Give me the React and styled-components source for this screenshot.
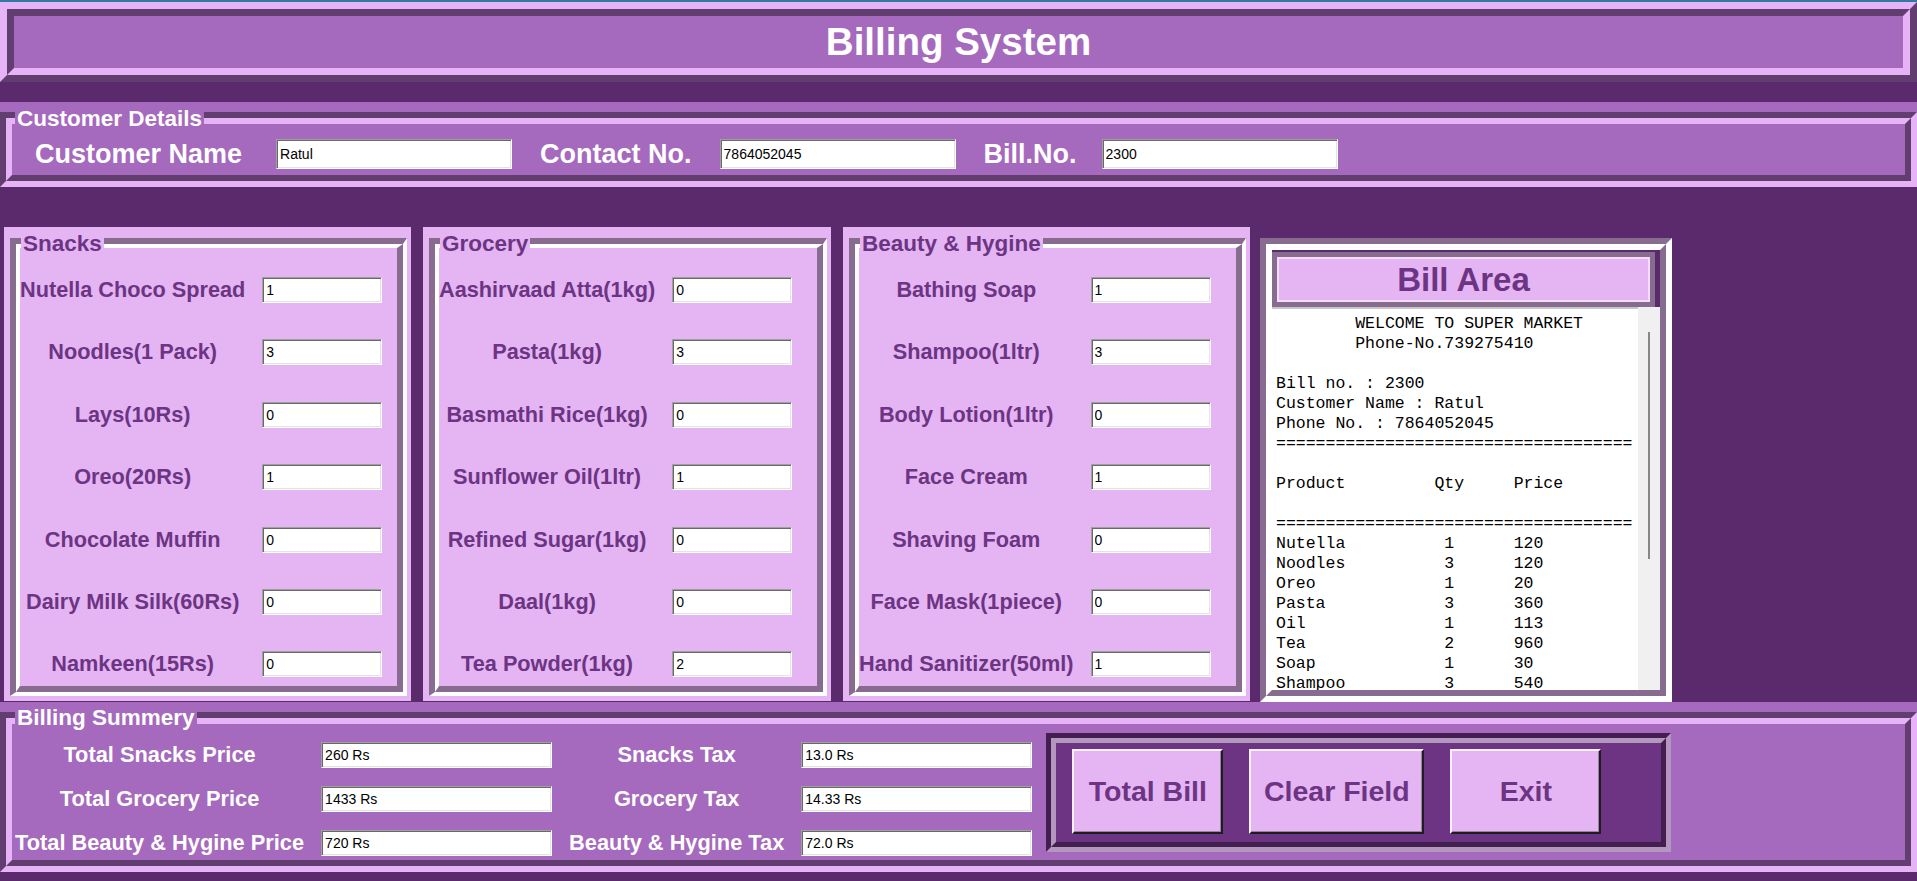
import styled, { createGlobalStyle } from 'styled-components'

const colors = {
  root: '#5a2a6c',
  purple: '#a569bd',
  purpleLight: '#e6b3f7',
  purpleDark: '#613e6f',
  lilac: '#e4b4f3',
  lilacDark: '#886c90',
  deep: '#6c3483',
  deepDark: '#431f51',
  deepLight: '#b497be',
  edge: '#2f7a9f',
}

const snacks = [
  ['Nutella Choco Spread', '1'],
  ['Noodles(1 Pack)', '3'],
  ['Lays(10Rs)', '0'],
  ['Oreo(20Rs)', '1'],
  ['Chocolate Muffin', '0'],
  ['Dairy Milk Silk(60Rs)', '0'],
  ['Namkeen(15Rs)', '0'],
]

const grocery = [
  ['Aashirvaad Atta(1kg)', '0'],
  ['Pasta(1kg)', '3'],
  ['Basmathi Rice(1kg)', '0'],
  ['Sunflower Oil(1ltr)', '1'],
  ['Refined Sugar(1kg)', '0'],
  ['Daal(1kg)', '0'],
  ['Tea Powder(1kg)', '2'],
]

const beauty = [
  ['Bathing Soap', '1'],
  ['Shampoo(1ltr)', '3'],
  ['Body Lotion(1ltr)', '0'],
  ['Face Cream', '1'],
  ['Shaving Foam', '0'],
  ['Face Mask(1piece)', '0'],
  ['Hand Sanitizer(50ml)', '1'],
]

const summary = [
  ['Total Snacks Price', '260 Rs', 'Snacks Tax', '13.0 Rs'],
  ['Total Grocery Price', '1433 Rs', 'Grocery Tax', '14.33 Rs'],
  ['Total Beauty & Hygine Price', '720 Rs', 'Beauty & Hygine Tax', '72.0 Rs'],
]

const billItems = [
  ['Nutella', '1', '120'],
  ['Noodles', '3', '120'],
  ['Oreo', '1', '20'],
  ['Pasta', '3', '360'],
  ['Oil', '1', '113'],
  ['Tea', '2', '960'],
  ['Soap', '1', '30'],
  ['Shampoo', '3', '540'],
]

const billText = [
  '        WELCOME TO SUPER MARKET',
  '        Phone-No.739275410',
  '',
  'Bill no. : 2300',
  'Customer Name : Ratul',
  'Phone No. : 7864052045',
  '='.repeat(36),
  '',
  'Product'.padEnd(16) + 'Qty'.padEnd(8) + 'Price',
  '',
  '='.repeat(36),
  ...billItems.map(([n, q, p]) => n.padEnd(17) + q.padEnd(7) + p),
].join('\n')

const GlobalStyle = createGlobalStyle`
  html, body {
    margin: 0;
    padding: 0;
    background: ${colors.root};
    overflow: hidden;
  }
  body {
    font-family: 'Liberation Sans', Arial, sans-serif;
  }
`

function Groove ({ outer, inner, tl, br, bg, fill, children }) {
  return (
    <Bevel $w={outer} $tl={tl} $br={br} $fill={fill}>
      <Bevel $w={inner} $tl={br} $br={tl} $fill={fill} $bg={bg}>
        {children}
      </Bevel>
    </Bevel>
  )
}

function ItemPanel ({ title, items, width }) {
  return (
    <Panel $w={width}>
      <FrameTitle $color={colors.deep} $top={4} $left={17}>{title}</FrameTitle>
      <Bevel $w='6px 4px 4px 6px' $tl={colors.lilacDark} $br='#ffffff' $fill>
        <Bevel $w='4px 6px 6px 4px' $tl='#ffffff' $br={colors.lilacDark} $fill>
          <ItemGrid>
            {items.map(([name, qty]) => (
              <Cell key={name}>
                <ItemLabel>{name}</ItemLabel>
                <Entry $w={120} $h={26} value={qty} readOnly />
              </Cell>
            ))}
          </ItemGrid>
        </Bevel>
      </Bevel>
    </Panel>
  )
}

export default function App () {
  return (
    <>
      <GlobalStyle />
      <Window>
        <TopEdge />
        <Groove outer='7px' inner='7px' tl={colors.purpleLight} br={colors.purpleDark} bg={colors.purple}>
          <TitleText>Billing System</TitleText>
        </Groove>

        <LabelFrame $bg={colors.purple} $mt={20}>
          <FrameTitle $color='#fff' $top={4} $left={15}>Customer Details</FrameTitle>
          <Groove outer='6px' inner='6px' tl={colors.purpleDark} br={colors.purpleLight}>
            <CustomerRow>
              <CustLabel $gap={34}>Customer Name</CustLabel>
              <Entry $w={236} $h={30} $mr={28} value='Ratul' readOnly />
              <CustLabel $gap={28}>Contact No.</CustLabel>
              <Entry $w={236} $h={30} $mr={28} value='7864052045' readOnly />
              <CustLabel $gap={25}>Bill.No.</CustLabel>
              <Entry $w={236} $h={30} value='2300' readOnly />
            </CustomerRow>
          </Groove>
        </LabelFrame>

        <ProductRow>
          <ItemPanel title='Snacks' items={snacks} width={407} />
          <ItemPanel title='Grocery' items={grocery} width={408} />
          <ItemPanel title='Beauty & Hygine' items={beauty} width={407} />
          <BillFrame>
            <Groove outer='6px' inner='6px' tl={colors.lilacDark} br='#ffffff' fill>
              <BillColumn>
                <BillLabel>Bill Area</BillLabel>
                <BillBox>
                  <BillBody>{billText}</BillBody>
                  <ScrollTrack>
                    <ScrollThumb />
                  </ScrollTrack>
                </BillBox>
              </BillColumn>
            </Groove>
          </BillFrame>
        </ProductRow>

        <LabelFrame $bg={colors.purple}>
          <FrameTitle $color='#fff' $top={3} $left={15}>Billing Summery</FrameTitle>
          <Groove outer='6px' inner='6px' tl={colors.purpleDark} br={colors.purpleLight}>
            <SummaryRow>
              <SummaryGrid>
                {summary.map(([l1, v1, l2, v2]) => (
                  <Cell key={l1}>
                    <SummaryLabel>{l1}</SummaryLabel>
                    <Entry $w={231} $h={26} value={v1} readOnly />
                    <SummaryLabel>{l2}</SummaryLabel>
                    <Entry $w={231} $h={26} value={v2} readOnly />
                  </Cell>
                ))}
              </SummaryGrid>
              <ButtonFrame>
                <Groove outer='5px' inner='5px' tl={colors.deepDark} br={colors.deepLight} bg={colors.deep} fill>
                  <ButtonRow>
                    <ActionButton $w={151}>Total Bill</ActionButton>
                    <ActionButton $w={175}>Clear Field</ActionButton>
                    <ActionButton $w={151}>Exit</ActionButton>
                  </ButtonRow>
                </Groove>
              </ButtonFrame>
            </SummaryRow>
          </Groove>
        </LabelFrame>
      </Window>
    </>
  )
}

/* FRAME */
const Window = styled.div`
  width: 1917px;
  height: 881px;
  display: flex;
  flex-direction: column;
  background: ${colors.root};
  overflow: hidden;
`

const TopEdge = styled.div`
  height: 2px;
  background: ${colors.edge};
`

const Bevel = styled.div`
  box-sizing: border-box;
  border-style: solid;
  border-width: ${({ $w }) => $w};
  border-color: ${({ $tl, $br }) => `${$tl} ${$br} ${$br} ${$tl}`};
  background: ${({ $bg }) => $bg || 'transparent'};
  height: ${({ $fill }) => ($fill ? '100%' : 'auto')};
`

const Cell = styled.div`
  display: contents;
`

const TitleText = styled.h1`
  margin: 0;
  height: 52px;
  line-height: 52px;
  text-align: center;
  color: #fff;
  font-size: 38.5px;
  font-weight: 700;
`

const LabelFrame = styled.section`
  position: relative;
  margin-top: ${({ $mt }) => $mt || 0}px;
  padding-top: 10px;
  background: ${({ $bg }) => $bg};
`

const FrameTitle = styled.span`
  position: absolute;
  z-index: 1;
  top: ${({ $top }) => $top}px;
  left: ${({ $left }) => $left}px;
  padding: 0 2px;
  background: inherit;
  color: ${({ $color }) => $color};
  font-size: 22.5px;
  font-weight: 700;
  line-height: 26px;
  white-space: nowrap;
`

const Entry = styled.input`
  box-sizing: border-box;
  width: ${({ $w }) => $w}px;
  height: ${({ $h }) => $h}px;
  margin: 0 ${({ $mr }) => $mr || 0}px 0 0;
  padding: 0 3px;
  border: 1px solid;
  border-color: #a0a0a0 #ffffff #ffffff #a0a0a0;
  box-shadow: inset 1px 1px 0 #696969, inset -1px -1px 0 #e3e3e3;
  background: #fff;
  color: #000;
  font-family: 'Liberation Sans', Arial, sans-serif;
  font-size: 14px;
  outline: none;
`

/* CUSTOMER */
const CustomerRow = styled.div`
  display: flex;
  align-items: center;
  height: 30px;
  padding: 15px 0 6px 23px;
`

const CustLabel = styled.span`
  margin-right: ${({ $gap }) => $gap}px;
  color: #fff;
  font-size: 27px;
  font-weight: 700;
  line-height: 30px;
  white-space: nowrap;
`

/* PRODUCTS */
const ProductRow = styled.div`
  display: flex;
  align-items: flex-start;
  gap: 12px;
  height: 475px;
  margin-top: 40px;
  padding-left: 4px;
`

const Panel = styled.section`
  position: relative;
  flex: none;
  box-sizing: border-box;
  width: ${({ $w }) => $w}px;
  height: 474px;
  padding: 11px 4px 5px 6px;
  background: ${colors.lilac};
`

const ItemGrid = styled.div`
  display: grid;
  grid-template-columns: auto 120px;
  grid-template-rows: repeat(7, 26px);
  column-gap: 17px;
  row-gap: 36.4px;
  padding-top: 29px;
  align-items: center;
  justify-content: start;
`

const ItemLabel = styled.span`
  justify-self: center;
  color: ${colors.deep};
  font-size: 21.7px;
  font-weight: 700;
  line-height: 26px;
  white-space: nowrap;
`

/* BILL AREA */
const BillFrame = styled.section`
  flex: none;
  align-self: flex-end;
  box-sizing: border-box;
  width: 412px;
  height: 464px;
  margin-left: -2px;
`

const BillColumn = styled.div`
  display: flex;
  flex-direction: column;
  height: 100%;
`

const BillLabel = styled.div`
  flex: none;
  box-sizing: border-box;
  height: 55px;
  margin: 2px 5px 0 0;
  display: flex;
  align-items: center;
  justify-content: center;
  border: 5px solid ${colors.lilacDark};
  box-shadow: inset 0 0 0 2px #f4dcfb;
  background: ${colors.lilac};
  color: ${colors.deep};
  font-size: 33px;
  font-weight: 700;
`

const BillBox = styled.div`
  flex: 1;
  display: flex;
  min-height: 0;
`

const BillBody = styled.pre`
  flex: 1;
  margin: 0;
  padding: 5px 0 0 4px;
  overflow: hidden;
  background: #fff;
  border-top: 2px solid #c6c6c6;
  color: #000;
  font-family: 'Liberation Mono', 'Courier New', monospace;
  font-size: 16.5px;
  line-height: 20px;
  tab-size: 8;
  white-space: pre;
`

const ScrollTrack = styled.div`
  flex: none;
  box-sizing: border-box;
  width: 22px;
  display: flex;
  justify-content: center;
  padding-top: 25px;
  background: #f0f0f0;
`

const ScrollThumb = styled.div`
  width: 2px;
  height: 227px;
  background: #878787;
`

/* SUMMARY */
const SummaryRow = styled.div`
  display: flex;
  align-items: flex-start;
  height: 136px;
  padding-left: 3px;
`

const SummaryGrid = styled.div`
  display: grid;
  grid-template-columns: auto 231px auto 231px;
  grid-template-rows: repeat(3, 26px);
  column-gap: 17px;
  row-gap: 18px;
  padding-top: 18px;
  align-items: center;
`

const SummaryLabel = styled.span`
  justify-self: center;
  color: #fff;
  font-size: 21.8px;
  font-weight: 700;
  line-height: 26px;
  white-space: nowrap;
`

const ButtonFrame = styled.div`
  flex: none;
  box-sizing: border-box;
  width: 625px;
  height: 119px;
  margin: 9px 0 0 14px;
`

const ButtonRow = styled.div`
  display: flex;
  gap: 26px;
  padding: 6px 0 0 16px;
`

const ActionButton = styled.button`
  box-sizing: border-box;
  width: ${({ $w }) => $w}px;
  height: 85px;
  padding: 0;
  border: 2px solid;
  border-color: #fbf1ff #1e1e1e #1e1e1e #fbf1ff;
  box-shadow: inset -1px -1px 0 #9c7fa6;
  background: ${colors.lilac};
  color: ${colors.deep};
  font-family: 'Liberation Sans', Arial, sans-serif;
  font-size: 28.5px;
  font-weight: 700;
  cursor: pointer;
`
